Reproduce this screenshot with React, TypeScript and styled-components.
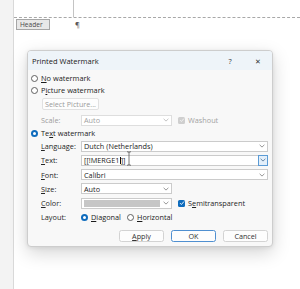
import React from "react";
import styled, { createGlobalStyle, css } from "styled-components";

const Global = createGlobalStyle`
  html, body { margin: 0; padding: 0; background: #ffffff; }
  body {
    width: 300px; height: 289px; overflow: hidden;
    font-family: "Open Sans", "Noto Sans", "Liberation Sans", sans-serif;
    color: #1b1b1b;
  }
  * { box-sizing: border-box; }
`;

const Page = styled.div`
  position: relative;
  display: flex;
  width: 300px;
  height: 289px;
`;

const Gutter = styled.div`
  width: 14px;
  background: #f3f3f3;
  border-right: 1px solid #d9d9d9;
`;

const Doc = styled.div`
  flex: 1;
  display: flex;
  flex-direction: column;
`;

const TopMargin = styled.div`
  height: 18px;
  border-bottom: 1px dashed #a8a8a8;
  padding-left: 59px;
`;

const CornerMark = styled.div`
  width: 1px;
  height: 100%;
  background: #c4c4c4;
`;

const HeaderRow = styled.div`
  display: flex;
  align-items: flex-start;
  gap: 25px;
  padding: 1px 0 0 2px;
`;

const HeaderTag = styled.div`
  width: 34px;
  height: 11px;
  background: #e8e8e8;
  border: 1px solid #a6a6a6;
  font-size: 6.6px;
  line-height: 9px;
  color: #4a4a4a;
  padding-left: 3px;
`;

const Pilcrow = styled.span`
  font-size: 7.4px;
  line-height: 11px;
  color: #555;
`;

const Dialog = styled.div`
  position: absolute;
  left: 27px;
  top: 50px;
  width: 246px;
  height: 197px;
  background: #f8f8f8;
  border: 1px solid #cdcdcd;
  border-radius: 4px;
  box-shadow: 0 6px 18px rgba(0, 0, 0, 0.17), 0 1px 4px rgba(0, 0, 0, 0.08);
  display: flex;
  flex-direction: column;
  overflow: hidden;
`;

const TitleBar = styled.div`
  height: 19px;
  display: flex;
  align-items: center;
  background: #eef4f9;
  padding-left: 4px;
`;

const Title = styled.div`
  flex: 1;
  font-size: 7.5px;
  color: #1a1a1a;
`;

const TitleButton = styled.div`
  width: 28px;
  height: 19px;
  display: flex;
  align-items: center;
  justify-content: center;
  font-size: 7.4px;
  color: #333;
`;

const Body = styled.div`
  display: flex;
  flex-direction: column;
  padding: 2px 4px 0 3px;
`;

const OptionRow = styled.div`
  height: 12px;
  display: flex;
  align-items: center;
  gap: 3px;
  font-size: 7.4px;
`;

const RadioDot = styled.span<{ $on?: boolean }>`
  width: 7px;
  height: 7px;
  flex: none;
  border-radius: 50%;
  background: #fff;
  border: 1px solid #5f5f5f;
  ${(p) =>
    p.$on &&
    css`
      border: 2.2px solid #0f6cbd;
    `}
`;

const Key = styled.span`
  text-decoration: underline;
  text-underline-offset: 1px;
  text-decoration-thickness: 0.6px;
`;

const SelectButton = styled.div`
  margin: 2px 0 0 11px;
  width: 57px;
  height: 12px;
  display: flex;
  align-items: center;
  justify-content: center;
  background: #fdfdfd;
  border: 1px solid #e1e1e1;
  border-radius: 2px;
  font-size: 7.2px;
  color: #9b9b9b;
`;

const FormRow = styled.div<{ $h?: number; $mt?: number }>`
  height: ${(p) => p.$h ?? 14.25}px;
  margin-top: ${(p) => p.$mt ?? 0}px;
  display: flex;
  align-items: center;
  padding-left: 10px;
  font-size: 7.3px;
`;

const Label = styled.div<{ $dim?: boolean }>`
  width: 40px;
  flex: none;
  color: ${(p) => (p.$dim ? "#9d9d9d" : "#262626")};
`;

const Combo = styled.div<{ $w: number; $dim?: boolean }>`
  position: relative;
  width: ${(p) => p.$w}px;
  height: 11px;
  flex: none;
  display: flex;
  align-items: center;
  background: #fff;
  border: 1px solid ${(p) => (p.$dim ? "#dedede" : "#cbcbcb")};
  padding-left: 2px;
  font-size: 7.3px;
  color: ${(p) => (p.$dim ? "#a0a0a0" : "#1b1b1b")};
`;

const ComboText = styled.div`
  flex: 1;
  display: flex;
  align-items: center;
  white-space: nowrap;
`;

const ArrowBox = styled.div<{ $hot?: boolean }>`
  width: 10px;
  height: 100%;
  flex: none;
  display: flex;
  align-items: center;
  justify-content: center;
  ${(p) =>
    p.$hot &&
    css`
      background: #e3effa;
      border: 1px solid #5b9bd5;
      margin-right: -1px;
      height: 11px;
    `}
`;

const Caret = styled.span`
  display: inline-block;
  width: 0.7px;
  height: 7px;
  background: #111;
  margin: 0 0.3px;
`;

const IBeam = styled.svg`
  position: absolute;
  left: 44px;
  top: -5px;
`;

const Swatch = styled.div`
  flex: 1;
  height: 7px;
  background: #c6c6c6;
  margin-right: 1px;
`;

const Check = styled.span<{ $dim?: boolean }>`
  width: 7px;
  height: 7px;
  flex: none;
  border-radius: 1.5px;
  display: flex;
  align-items: center;
  justify-content: center;
  background: ${(p) => (p.$dim ? "#cfcfcf" : "#0f6cbd")};
  margin-left: 6px;
`;

const CheckText = styled.span<{ $dim?: boolean }>`
  margin-left: 3px;
  color: ${(p) => (p.$dim ? "#a2a2a2" : "#262626")};
`;

const RadioGroup = styled.div`
  display: flex;
  align-items: center;
`;

const RadioItem = styled.div<{ $w?: number }>`
  display: flex;
  align-items: center;
  gap: 3px;
  width: ${(p) => (p.$w ? `${p.$w}px` : "auto")};
`;

const ButtonRow = styled.div`
  margin-top: 5.5px;
  display: flex;
  justify-content: flex-end;
  gap: 7px;
`;

const DlgButton = styled.div<{ $primary?: boolean }>`
  width: 45px;
  height: 12px;
  display: flex;
  align-items: center;
  justify-content: center;
  background: #fdfdfd;
  border: 1px solid ${(p) => (p.$primary ? "#4f8fd0" : "#d3d3d3")};
  border-radius: 2.5px;
  font-size: 7.2px;
  color: #333;
`;

const Chevron = ({ color = "#7d7d7d" }: { color?: string }) => (
  <svg width="6" height="4" viewBox="0 0 6 4">
    <path d="M0.6 0.8 L3 3.1 L5.4 0.8" fill="none" stroke={color} strokeWidth="0.8" />
  </svg>
);

const Tick = ({ color }: { color: string }) => (
  <svg width="6" height="6" viewBox="0 0 6 6">
    <path d="M1 3.1 L2.4 4.5 L5 1.5" fill="none" stroke={color} strokeWidth="0.9" />
  </svg>
);

export default function App() {
  return (
    <>
      <Global />
      <Page>
        <Gutter />
        <Doc>
          <TopMargin>
            <CornerMark />
          </TopMargin>
          <HeaderRow>
            <HeaderTag>Header</HeaderTag>
            <Pilcrow>¶</Pilcrow>
          </HeaderRow>
        </Doc>

        <Dialog>
          <TitleBar>
            <Title>Printed Watermark</Title>
            <TitleButton>?</TitleButton>
            <TitleButton>✕</TitleButton>
          </TitleBar>
          <Body>
            <OptionRow>
              <RadioDot />
              <span>
                <Key>N</Key>o watermark
              </span>
            </OptionRow>
            <OptionRow>
              <RadioDot />
              <span>
                P<Key>i</Key>cture watermark
              </span>
            </OptionRow>
            <SelectButton>Select Picture...</SelectButton>
            <FormRow $h={14} $mt={3}>
              <Label $dim>Scale:</Label>
              <Combo $w={91} $dim>
                <ComboText>Auto</ComboText>
                <ArrowBox>
                  <Chevron color="#b5b5b5" />
                </ArrowBox>
              </Combo>
              <Check $dim>
                <Tick color="#f4f4f4" />
              </Check>
              <CheckText $dim>Washout</CheckText>
            </FormRow>
            <OptionRow>
              <RadioDot $on />
              <span>
                Te<Key>x</Key>t watermark
              </span>
            </OptionRow>
            <FormRow>
              <Label>
                <Key>L</Key>anguage:
              </Label>
              <Combo $w={187}>
                <ComboText>Dutch (Netherlands)</ComboText>
                <ArrowBox>
                  <Chevron />
                </ArrowBox>
              </Combo>
            </FormRow>
            <FormRow>
              <Label>
                <Key>T</Key>ext:
              </Label>
              <Combo $w={187}>
                <ComboText>
                  [[!MERGE1
                  <Caret />
                  ]]
                </ComboText>
                <ArrowBox $hot>
                  <Chevron color="#4a6d8f" />
                </ArrowBox>
                <IBeam width="6" height="15" viewBox="0 0 6 15">
                  <path
                    d="M1 0.8 H2.3 Q3 0.8 3 1.8 V13.2 Q3 14.2 2.3 14.2 H1 M5 0.8 H3.7 Q3 0.8 3 1.8 M3 13.2 Q3 14.2 3.7 14.2 H5"
                    fill="none"
                    stroke="#555"
                    strokeWidth="0.8"
                  />
                </IBeam>
              </Combo>
            </FormRow>
            <FormRow>
              <Label>
                <Key>F</Key>ont:
              </Label>
              <Combo $w={187}>
                <ComboText>Calibri</ComboText>
                <ArrowBox>
                  <Chevron />
                </ArrowBox>
              </Combo>
            </FormRow>
            <FormRow>
              <Label>
                <Key>S</Key>ize:
              </Label>
              <Combo $w={91}>
                <ComboText>Auto</ComboText>
                <ArrowBox>
                  <Chevron />
                </ArrowBox>
              </Combo>
            </FormRow>
            <FormRow>
              <Label>
                <Key>C</Key>olor:
              </Label>
              <Combo $w={91}>
                <Swatch />
                <ArrowBox>
                  <Chevron />
                </ArrowBox>
              </Combo>
              <Check>
                <Tick color="#ffffff" />
              </Check>
              <CheckText>
                S<Key>e</Key>mitransparent
              </CheckText>
            </FormRow>
            <FormRow>
              <Label>Layout:</Label>
              <RadioGroup>
                <RadioItem $w={46}>
                  <RadioDot $on />
                  <span>
                    <Key>D</Key>iagonal
                  </span>
                </RadioItem>
                <RadioItem>
                  <RadioDot />
                  <span>
                    <Key>H</Key>orizontal
                  </span>
                </RadioItem>
              </RadioGroup>
            </FormRow>
            <ButtonRow>
              <DlgButton>
                <span>
                  <Key>A</Key>pply
                </span>
              </DlgButton>
              <DlgButton $primary>OK</DlgButton>
              <DlgButton>Cancel</DlgButton>
            </ButtonRow>
          </Body>
        </Dialog>
      </Page>
    </>
  );
}
